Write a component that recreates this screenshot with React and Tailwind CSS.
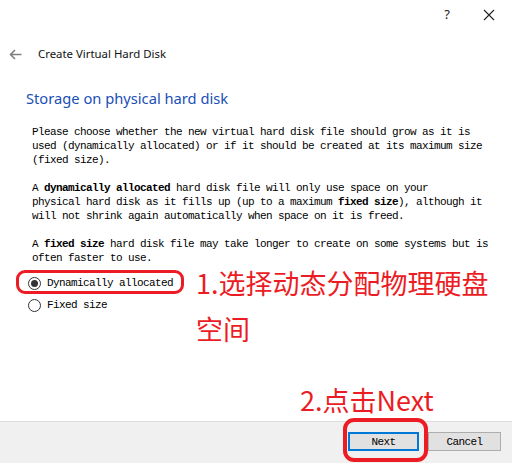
export default function App() {
  const mono = "font-['Liberation_Mono','DejaVu_Sans_Mono',monospace] text-[11px] tracking-[-0.6px] leading-[14px] text-black";
  return (
    <div className="w-[512px] h-[463px] bg-white relative overflow-hidden flex flex-col font-['Noto_Sans','Noto_Sans_CJK_SC',sans-serif]">
      {/* title bar */}
      <div className="h-[29px] flex items-center justify-end pr-[16px] gap-[33px] text-[#222]">
        <span className="text-[13px] leading-none">?</span>
        <svg width="12" height="12" viewBox="0 0 12 12" className="mr-[1px]">
          <path d="M1 1 L11 11 M11 1 L1 11" stroke="#222" strokeWidth="1.1" fill="none" />
        </svg>
      </div>
      {/* header */}
      <div className="mt-[15px] h-[20px] flex items-center pl-[9px]">
        <svg width="13" height="11" viewBox="0 0 13 11">
          <path d="M6 1 L1.5 5.5 L6 10 M1.5 5.5 L12.5 5.5" stroke="#808080" strokeWidth="1.6" fill="none" />
        </svg>
        <span className="ml-[16px] text-[11.4px] text-[#111] leading-[20px]">Create Virtual Hard Disk</span>
      </div>
      {/* heading */}
      <div className="mt-[24px] h-[20px] pl-[26px] text-[14.7px] leading-[20px] text-[#1a4fb5]">
        Storage on physical hard disk
      </div>
      {/* body */}
      <div className={"mt-[17px] pl-[32px] whitespace-pre " + mono}>
        <div>Please choose whether the new virtual hard disk file should grow as it is</div>
        <div>used (dynamically allocated) or if it should be created at its maximum size</div>
        <div>(fixed size).</div>
        <div>&nbsp;</div>
        <div>A <b>dynamically allocated</b> hard disk file will only use space on your</div>
        <div>physical hard disk as it fills up (up to a maximum <b>fixed size</b>), although it</div>
        <div>will not shrink again automatically when space on it is freed.</div>
        <div>&nbsp;</div>
        <div>A <b>fixed size</b> hard disk file may take longer to create on some systems but is</div>
        <div>often faster to use.</div>
      </div>
      {/* radios */}
      <div className="mt-[9px] flex flex-col gap-[4px] pl-[28px]">
        <div className="h-[18px] flex items-center">
          <span className="w-[13px] h-[13px] rounded-full border border-[#333] flex items-center justify-center">
            <span className="w-[7px] h-[7px] rounded-full bg-[#333]" />
          </span>
          <span className={"ml-[6px] " + mono}>Dynamically allocated</span>
        </div>
        <div className="h-[18px] flex items-center">
          <span className="w-[13px] h-[13px] rounded-full border border-[#333]" />
          <span className={"ml-[6px] " + mono}>Fixed size</span>
        </div>
      </div>
      {/* bottom bar */}
      <div className="mt-auto h-[42px] bg-[#f0f0f0] border-t border-[#dcdcdc] flex justify-end items-start pt-[10px] pr-[11px] gap-[9px]">
        <div className={"w-[71px] h-[19px] bg-[#e1e1e1] border-2 border-[#0078d7] flex items-center justify-center " + mono}>Next</div>
        <div className={"w-[73px] h-[19px] bg-[#e1e1e1] border border-[#adadad] flex items-center justify-center " + mono}>Cancel</div>
      </div>

      {/* annotations */}
      <div className="absolute left-[16px] top-[270px] w-[168px] h-[24px] border-[3px] border-[#ec1c24] rounded-[9px]" />
      <div className="absolute left-[196px] top-[260px] text-[27px] leading-[46px] text-[#ec1c24] font-['Noto_Sans_CJK_SC',sans-serif]">
        <div>1.选择动态分配物理硬盘</div>
        <div>空间</div>
      </div>
      <div className="absolute left-[300px] top-[385px] text-[27px] leading-[30px] text-[#ec1c24] font-['Noto_Sans_CJK_SC',sans-serif]">
        2.点击Next
      </div>
      <div className="absolute left-[343px] top-[418px] w-[85px] h-[44px] border-[4px] border-[#ec1c24] rounded-[11px]" />
    </div>
  );
}
